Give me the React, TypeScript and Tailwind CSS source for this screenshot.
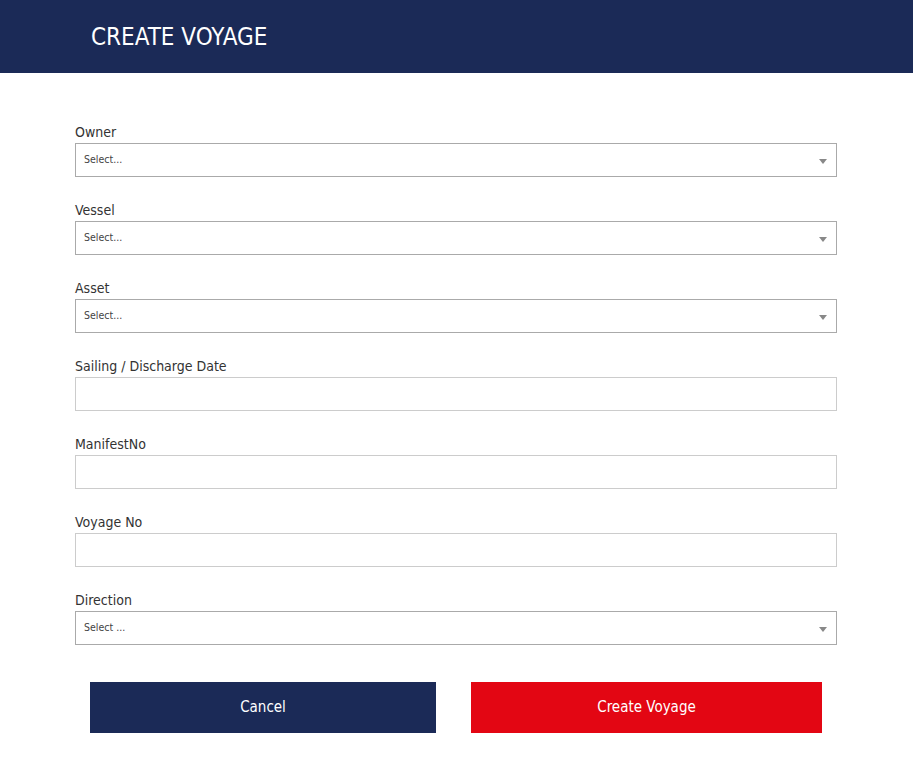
import { ReactNode } from 'react';

const font = { fontFamily: '"DejaVu Sans Condensed", "Liberation Sans", sans-serif' };

function Field({ label, children }: { label: string; children: ReactNode }) {
  return (
    <div className="flex flex-col">
      <label className="text-[14px] leading-[18px] text-[#333] mb-[2px]">{label}</label>
      {children}
    </div>
  );
}

function SelectBox({ placeholder }: { placeholder: string }) {
  return (
    <div className="h-[34px] border border-[#aaa] bg-white flex items-center justify-between pl-[8px] pr-[9px]">
      <span className="text-[10.5px] text-[#444]">{placeholder}</span>
      <span className="w-0 h-0 border-l-[4px] border-r-[4px] border-t-[5px] border-l-transparent border-r-transparent border-t-[#888] mt-[2px]" />
    </div>
  );
}

function TextBox() {
  return <input className="h-[34px] border border-[#ccc] bg-white outline-none px-2" />;
}

export default function App() {
  return (
    <div className="min-h-screen bg-white" style={font}>
      <header className="h-[73px] bg-[#1b2a57] flex items-center px-[91px]">
        <h1 className="text-white text-[24px] mt-[1px]">CREATE VOYAGE</h1>
      </header>

      <div className="px-[75px] pt-[50px] mr-[1px]">
        <div className="flex flex-col gap-[24px]">
          <Field label="Owner"><SelectBox placeholder="Select..." /></Field>
          <Field label="Vessel"><SelectBox placeholder="Select..." /></Field>
          <Field label="Asset"><SelectBox placeholder="Select..." /></Field>
          <Field label="Sailing / Discharge Date"><TextBox /></Field>
          <Field label="ManifestNo"><TextBox /></Field>
          <Field label="Voyage No"><TextBox /></Field>
          <Field label="Direction"><SelectBox placeholder="Select ..." /></Field>
        </div>

        <div className="flex justify-between pt-[37px] pl-[15px] pr-[15px]">
          <button className="w-[346px] h-[51px] bg-[#1b2a57] text-white text-[15px]">Cancel</button>
          <button className="w-[351px] h-[51px] bg-[#e30613] text-white text-[15px]">Create Voyage</button>
        </div>
      </div>
    </div>
  );
}
